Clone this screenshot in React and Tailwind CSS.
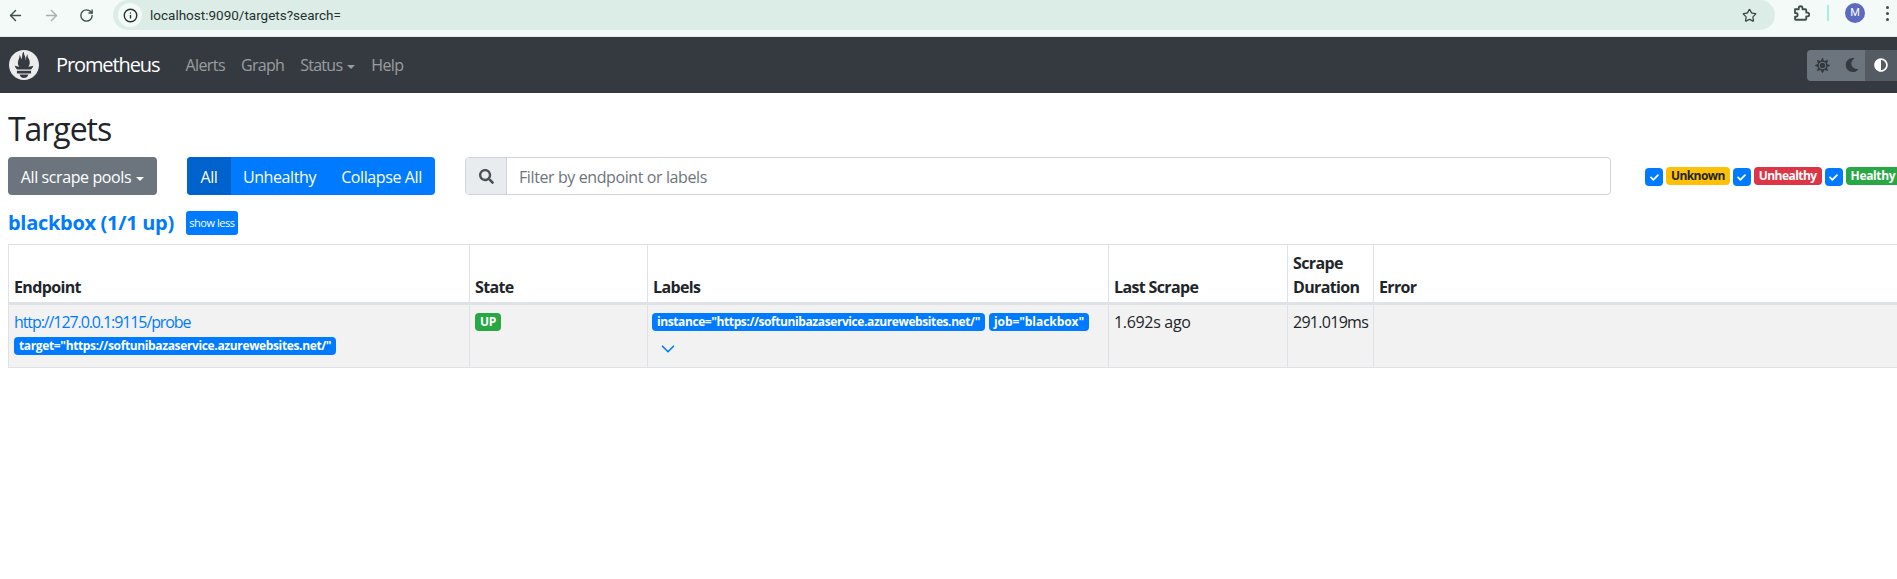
import React from 'react';
import { ArrowLeft, ArrowRight, RotateCw, Info, Star, ChevronDown } from 'lucide-react';
import { SiPrometheus } from 'react-icons/si';
import { FaSun, FaMoon, FaAdjust, FaSearch, FaCheck } from 'react-icons/fa';

function Caret() {
  return <span className="ml-[5px] inline-block border-x-[4.8px] border-t-[4.8px] border-x-transparent border-t-current align-[2px]" />;
}

function Badge({ className = 'bg-[#007bff] text-white', track = 'tracking-[-0.03em]', children }) {
  return <span className={`inline-block h-[18px] shrink-0 rounded-[4px] px-[5px] text-[12px] leading-[18px] font-bold whitespace-nowrap ${track} ${className}`}>{children}</span>;
}

function Check() {
  return (
    <span className="mt-[2px] flex h-[18px] w-[18px] shrink-0 items-center justify-center rounded-[4px] bg-[#007bff] text-white">
      <FaCheck className="size-[9px]" />
    </span>
  );
}

function Th({ children }) {
  return <th className="border border-b-[3px] border-[#dee2e6] px-[5px] pt-[6px] pb-[3px] text-left align-bottom font-bold leading-[24px] tracking-[-0.04em]">{children}</th>;
}

function Td({ children, className = '' }) {
  return <td className={`border border-[#dee2e6] p-[5px] align-top leading-[24px] ${className}`}>{children}</td>;
}

export default function App() {
  return (
    <div className="h-[579px] w-[1897px] overflow-hidden bg-white text-[16px] tracking-[-0.025em] text-[#212529] [font-family:'Open_Sans','Noto_Sans',sans-serif]">
      <div className="flex h-[37px] items-start border-b border-[#e3ebe8] bg-[#f3faf7] tracking-normal text-[#3f4f4b]">
        <div className="flex h-[30px] w-[113px] shrink-0 items-center pl-[7px]">
          <ArrowLeft className="size-[17px]" strokeWidth={2} />
          <ArrowRight className="ml-[19px] size-[17px] text-[#a7b0ad]" strokeWidth={2} />
          <RotateCw className="ml-[19px] size-[15px]" strokeWidth={2.2} />
        </div>
        <div className="flex h-[30px] w-[1662px] shrink-0 items-center rounded-[15px] bg-[#dcede8] pr-[18px] pl-[5px]">
          <span className="flex size-[24px] items-center justify-center rounded-full bg-[#f3faf7]">
            <Info className="size-[15px] text-[#26302e]" strokeWidth={2.2} />
          </span>
          <span className="ml-[8px] text-[13.5px] text-[#26302e] [font-family:'Roboto',sans-serif]">localhost:9090/targets?search=</span>
          <Star className="ml-auto size-[15px] text-[#3a4543]" strokeWidth={2} />
        </div>
        <div className="flex h-[26px] flex-1 items-center pl-[17px]">
          <svg viewBox="0 0 24 24" className="size-[18px]" fill="none" stroke="currentColor" strokeWidth="2.4" strokeLinejoin="round">
            <path d="M4 7h5V5.5a2.5 2.5 0 0 1 5 0V7h4a1 1 0 0 1 1 1v3.5h1.5a2.5 2.5 0 0 1 0 5H19V20a1 1 0 0 1-1 1H5a1 1 0 0 1-1-1v-3h1a2.5 2.5 0 0 0 0-5H4z" />
          </svg>
          <span className="ml-[17px] h-[16px] w-[2px] bg-[#a5efe2]" />
          <span className="ml-[16px] flex size-[20px] items-center justify-center rounded-full bg-[#5c6bc0] text-[11px] text-white [font-family:'Roboto',sans-serif]">M</span>
          <span className="ml-[21px] flex flex-col gap-[3px]">
            <i className="size-[3px] rounded-full bg-[#3f4f4b]" />
            <i className="size-[3px] rounded-full bg-[#3f4f4b]" />
            <i className="size-[3px] rounded-full bg-[#3f4f4b]" />
          </span>
        </div>
      </div>

      <nav className="flex h-[56px] items-center bg-[#343a40] pl-[9px] text-[rgba(255,255,255,0.5)]">
        <SiPrometheus className="size-[30px] text-[#ececec]" />
        <span className="ml-[17px] text-[20px] tracking-[-0.055em] text-white">Prometheus</span>
        <span className="ml-[26px] tracking-[-0.035em]">Alerts</span>
        <span className="ml-[16px] tracking-[-0.045em]">Graph</span>
        <span className="ml-[16px] tracking-[-0.045em]">Status<Caret /></span>
        <span className="ml-[16px] tracking-[-0.04em]">Help</span>
        <div className="ml-auto flex h-[31px] w-[90px] overflow-hidden rounded-l-[4px] bg-[#6c757d] text-[#343a40]">
          <span className="flex w-[31px] items-center justify-center"><FaSun className="size-[15px]" /></span>
          <span className="flex w-[27px] items-center justify-center"><FaMoon className="size-[14px]" /></span>
          <span className="flex flex-1 items-center justify-center bg-[#545b62] text-white"><FaAdjust className="size-[14px]" /></span>
        </div>
      </nav>

      <main className="pl-[8px]">
        <h1 className="mt-[10px] h-[54px] text-[32px] leading-[52px] font-medium tracking-[-0.033em]">Targets</h1>
        <div className="flex items-start">
          <button className="h-[38px] w-[149px] shrink-0 rounded-[4px] bg-[#6c757d] pt-[1px] text-center text-white">All scrape pools<Caret /></button>
          <div className="ml-[30px] flex h-[38px] w-[248px] shrink-0 overflow-hidden rounded-[4px] bg-[#007bff] text-white">
            <span className="flex w-[44px] items-center justify-center bg-[#0062cc] pt-[1px]">All</span>
            <span className="flex w-[97px] items-center justify-center pt-[1px]">Unhealthy</span>
            <span className="flex flex-1 items-center justify-center pt-[1px]">Collapse All</span>
          </div>
          <div className="ml-[30px] flex h-[38px] w-[1146px] shrink-0 overflow-hidden rounded-[4px] border border-[#ced4da]">
            <span className="flex w-[41px] items-center justify-center border-r border-[#ced4da] bg-[#e9ecef] text-[#495057]"><FaSearch className="size-[15px]" /></span>
            <span className="flex flex-1 items-center pt-[1px] pl-[12px] text-[#6c757d]">Filter by endpoint or labels</span>
          </div>
          <div className="ml-[34px] flex h-[38px] shrink-0 items-center gap-[3px]">
            <Check />
            <Badge track="tracking-[-0.05em]" className="bg-[#ffc107] text-[#212529]">Unknown</Badge>
            <Check />
            <Badge track="tracking-[-0.045em]" className="bg-[#dc3545] text-white">Unhealthy</Badge>
            <Check />
            <Badge className="bg-[#28a745] text-white">Healthy</Badge>
          </div>
        </div>

        <div className="mt-[16px] flex h-[24px] items-center">
          <span className="text-[20px] font-bold tracking-[-0.015em] text-[#007bff]">blackbox (1/1 up)</span>
          <button className="ml-[12px] h-[24px] w-[52px] shrink-0 rounded-[3px] bg-[#007bff] text-[11px] tracking-[-0.04em] text-white">show less</button>
        </div>

        <table className="mt-[9px] w-[1900px] table-fixed border-collapse">
          <colgroup>
            <col className="w-[461px]" />
            <col className="w-[178px]" />
            <col className="w-[461px]" />
            <col className="w-[179px]" />
            <col className="w-[86px]" />
            <col />
          </colgroup>
          <thead>
            <tr>
              <Th>Endpoint</Th>
              <Th>State</Th>
              <Th>Labels</Th>
              <Th>Last Scrape</Th>
              <Th>Scrape Duration</Th>
              <Th>Error</Th>
            </tr>
          </thead>
          <tbody>
            <tr className="bg-[#f2f2f2]">
              <Td>
                <div className="tracking-[-0.068em] text-[#007bff]">http://127.0.0.1:9115/probe</div>
                <div className="flex h-[28px] items-start pt-[3px]"><Badge>target="https://softunibazaservice.azurewebsites.net/"</Badge></div>
              </Td>
              <Td><div className="flex pt-[3px]"><Badge className="bg-[#28a745] text-white">UP</Badge></div></Td>
              <Td>
                <div className="-ml-[1px] flex gap-[4px] pt-[3px]">
                  <Badge track="tracking-[-0.034em]">instance="https://softunibazaservice.azurewebsites.net/"</Badge>
                  <Badge track="tracking-[-0.005em]">job="blackbox"</Badge>
                </div>
                <ChevronDown className="mt-[7px] ml-[4px] size-[22px] text-[#007bff]" strokeWidth={1.8} />
              </Td>
              <Td className="tracking-[-0.02em]">1.692s ago</Td>
              <Td className="tracking-[-0.045em]">291.019ms</Td>
              <Td />
            </tr>
          </tbody>
        </table>
      </main>
    </div>
  );
}
